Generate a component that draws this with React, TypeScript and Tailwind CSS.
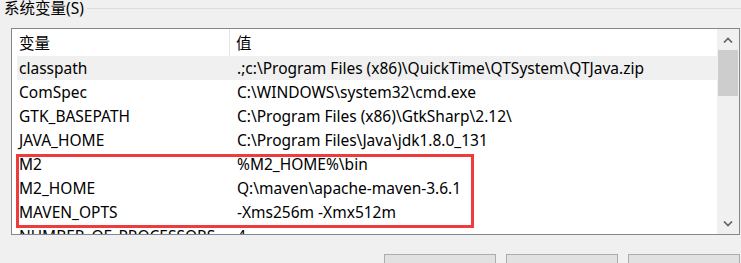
const rows = [
  { name: "classpath", value: ".;c:\\Program Files (x86)\\QuickTime\\QTSystem\\QTJava.zip" },
  { name: "ComSpec", value: "C:\\WINDOWS\\system32\\cmd.exe" },
  { name: "GTK_BASEPATH", value: "C:\\Program Files (x86)\\GtkSharp\\2.12\\" },
  { name: "JAVA_HOME", value: "C:\\Program Files\\Java\\jdk1.8.0_131" },
  { name: "M2", value: "%M2_HOME%\\bin" },
  { name: "M2_HOME", value: "Q:\\maven\\apache-maven-3.6.1" },
  { name: "MAVEN_OPTS", value: "-Xms256m -Xmx512m" },
  { name: "NUMBER_OF_PROCESSORS", value: "4" },
];

const font = { fontFamily: '"Noto Sans", "Noto Sans CJK SC", sans-serif' };

export default function App() {
  return (
    <div
      className="relative w-[741px] h-[263px] bg-[#f0f0f0] overflow-hidden text-[15.5px] text-black"
      style={font}
    >
      {/* Group title */}
      <div className="flex items-center h-[18px] mt-[-1px] pl-[4px]">
        <span className="leading-[18px] text-[15.5px]">系统变量(S)</span>
        <div className="flex-1 h-px bg-[#dcdcdc] ml-[3px]" />
      </div>

      {/* List */}
      <div className="ml-[11px] mt-[11px] w-[729px] h-[207px] border border-[#828790] bg-white flex">
        <div className="flex-1 overflow-hidden pl-[5px]">
          <div className="flex h-[27px] items-center">
            <div className="w-[213px] h-full flex items-center pl-[2px] pt-[2px] border-r border-[#e5e5e5]">变量</div>
            <div className="pl-[6px] pt-[2px]">值</div>
          </div>
          {rows.map((r, i) => (
            <div
              key={r.name}
              className={`flex h-[24px] items-center pt-[2px] whitespace-nowrap ${i === 0 ? "bg-[#f0f0f0]" : ""}`}
            >
              <div className="w-[213px] pl-[2px]">{r.name}</div>
              <div className="pl-[7px]">{r.value}</div>
            </div>
          ))}
        </div>

        {/* Scrollbar */}
        <div className="w-[22px] h-full bg-[#f0f0f0] flex flex-col">
          <div className="h-[21px] flex items-center justify-center">
            <svg width="10" height="6" viewBox="0 0 10 6">
              <path d="M1 5.5 L5 1.5 L9 5.5" fill="none" stroke="#606060" strokeWidth="1.6" />
            </svg>
          </div>
          <div className="mx-[1px] h-[46px] bg-[#cdcdcd]" />
          <div className="flex-1" />
          <div className="h-[21px] flex items-center justify-center">
            <svg width="10" height="6" viewBox="0 0 10 6">
              <path d="M1 0.5 L5 4.5 L9 0.5" fill="none" stroke="#606060" strokeWidth="1.6" />
            </svg>
          </div>
        </div>
      </div>

      {/* Buttons */}
      <div className="flex justify-end gap-[10px] mt-[19px] pr-[1px]">
        <div className="w-[112px] h-[24px] border border-[#adadad] bg-[#e1e1e1]" />
        <div className="w-[112px] h-[24px] border border-[#adadad] bg-[#e1e1e1]" />
        <div className="w-[112px] h-[24px] border border-[#adadad] bg-[#e1e1e1]" />
      </div>

      {/* Red highlight */}
      <div className="absolute left-[16px] top-[154px] w-[458px] h-[74px] border-[3px] border-[#ee3b3b]" />
    </div>
  );
}
